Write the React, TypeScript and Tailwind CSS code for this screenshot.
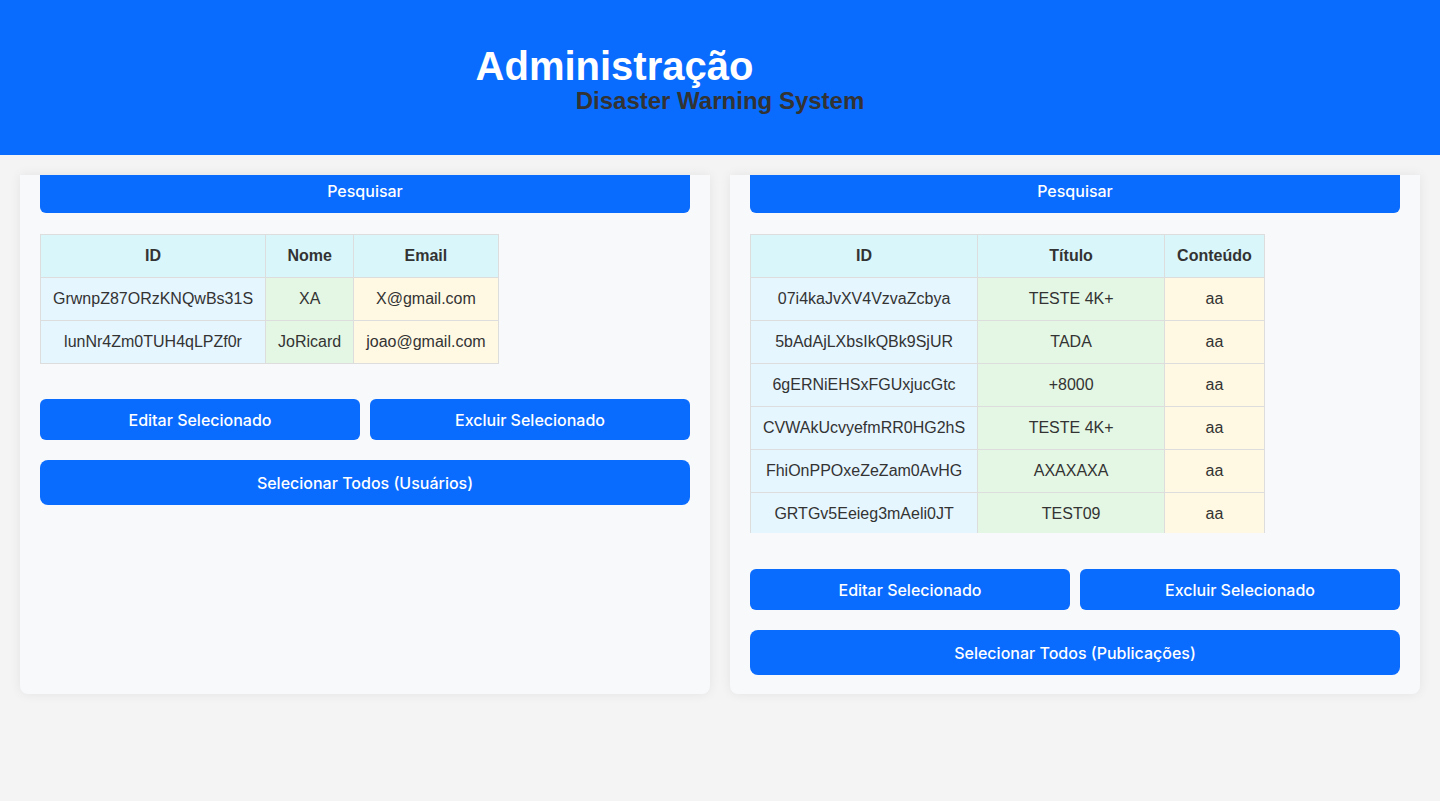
const users = [
  { id: "GrwnpZ87ORzKNQwBs31S", nome: "XA", email: "X@gmail.com" },
  { id: "lunNr4Zm0TUH4qLPZf0r", nome: "JoRicard", email: "joao@gmail.com" },
];

const posts = [
  { id: "07i4kaJvXV4VzvaZcbya", titulo: "TESTE 4K+", conteudo: "aa" },
  { id: "5bAdAjLXbsIkQBk9SjUR", titulo: "TADA", conteudo: "aa" },
  { id: "6gERNiEHSxFGUxjucGtc", titulo: "+8000", conteudo: "aa" },
  { id: "CVWAkUcvyefmRR0HG2hS", titulo: "TESTE 4K+", conteudo: "aa" },
  { id: "FhiOnPPOxeZeZam0AvHG", titulo: "AXAXAXA", conteudo: "aa" },
  { id: "GRTGv5Eeieg3mAeli0JT", titulo: "TEST09", conteudo: "aa" },
];

const btn =
  "flex items-center justify-center bg-[#0a6bff] text-white text-[16px] font-medium font-['Inter',sans-serif]";

const th =
  "border border-[#dddddd] bg-[#d9f6fb] h-[43px] px-3 text-center font-bold text-[#333333]";
const tdId = "border border-[#dddddd] bg-[#e6f6ff] h-[43px] px-3 text-center";
const tdMid = "border border-[#dddddd] bg-[#e4f7e4] h-[43px] px-3 text-center";
const tdEnd = "border border-[#dddddd] bg-[#fff9e3] h-[43px] px-3 text-center";

function Panel({
  children,
  label,
  gap,
}: {
  children: React.ReactNode;
  label: string;
  gap: string;
}) {
  return (
    <div className="flex flex-col rounded-b-lg bg-[#f7f9fb] px-5 pb-[19px] shadow-[0_0_12px_rgba(0,0,0,0.07)]">
      <button className={`${btn} h-[38px] w-full rounded-b-md pb-[6px]`}>
        Pesquisar
      </button>

      <div className="mt-[21px]">{children}</div>

      <div className={`${gap} flex gap-[10px]`}>
        <button className={`${btn} h-[41px] flex-1 rounded-md`}>
          Editar Selecionado
        </button>
        <button className={`${btn} h-[41px] flex-1 rounded-md`}>
          Excluir Selecionado
        </button>
      </div>
      <button className={`${btn} mt-5 h-[45px] w-full rounded-lg`}>
        Selecionar Todos ({label})
      </button>
    </div>
  );
}

export default function App() {
  return (
    <div className="min-h-[801px] bg-[#f4f4f4] font-['Liberation_Sans',Arial,sans-serif] text-[#333333]">
      <header className="flex h-[155px] flex-col items-center bg-[#0a6bff] pt-[46px]">
        <h1 className="mr-[211px] text-[40px] font-bold leading-[40px] text-white">
          Administração
        </h1>
        <h2 className="mt-[3px] text-[24px] font-bold leading-[24px] text-[#333333]">
          Disaster Warning System
        </h2>
      </header>

      <main className="grid grid-cols-2 gap-5 px-5 pt-5">
        <Panel label="Usuários" gap="mt-[35px]">
          <table className="border-collapse text-[16px]">
            <thead>
              <tr>
                <th className={`${th} w-[225px]`}>ID</th>
                <th className={`${th} w-[88px]`}>Nome</th>
                <th className={`${th} w-[144px]`}>Email</th>
              </tr>
            </thead>
            <tbody>
              {users.map((u) => (
                <tr key={u.id}>
                  <td className={tdId}>{u.id}</td>
                  <td className={tdMid}>{u.nome}</td>
                  <td className={tdEnd}>{u.email}</td>
                </tr>
              ))}
            </tbody>
          </table>
        </Panel>

        <Panel label="Publicações" gap="mt-9">
          <div className="h-[299px] overflow-hidden">
            <table className="border-collapse text-[16px]">
              <thead>
                <tr>
                  <th className={`${th} w-[227px]`}>ID</th>
                  <th className={`${th} w-[187px]`}>Título</th>
                  <th className={`${th} w-[99px]`}>Conteúdo</th>
                </tr>
              </thead>
              <tbody>
                {posts.map((p) => (
                  <tr key={p.id}>
                    <td className={tdId}>{p.id}</td>
                    <td className={tdMid}>{p.titulo}</td>
                    <td className={tdEnd}>{p.conteudo}</td>
                  </tr>
                ))}
              </tbody>
            </table>
          </div>
        </Panel>
      </main>
    </div>
  );
}
